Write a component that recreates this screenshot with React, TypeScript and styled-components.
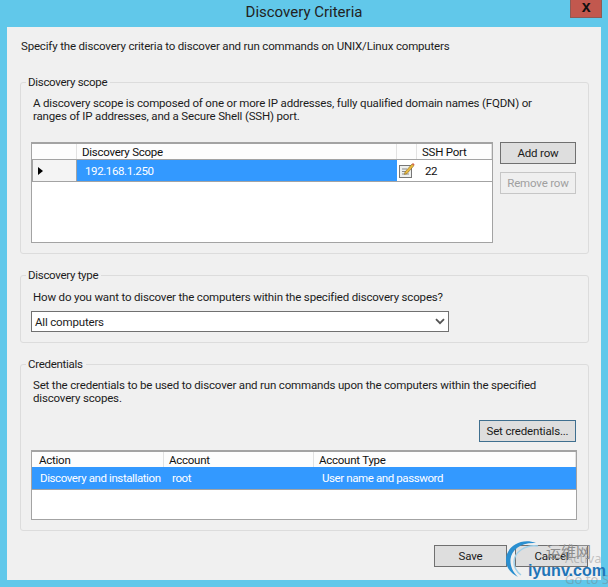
import React from "react";
import styled, { createGlobalStyle } from "styled-components";

const Global = createGlobalStyle`
  html, body { margin: 0; padding: 0; background: #61c8ea; }
  * { box-sizing: border-box; }
`;

const Window = styled.div`
  position: relative;
  width: 608px;
  height: 587px;
  background: #61c8ea;
  padding: 0 7px 7px 7px;
  display: flex;
  flex-direction: column;
  overflow: hidden;
  font-family: Roboto, "Noto Sans", sans-serif;
  font-size: 11.5px;
  letter-spacing: -0.17px;
  color: #1c1c1c;
`;

const TitleBar = styled.div`
  height: 27px;
  flex: none;
  text-align: center;
  font-size: 15px;
  letter-spacing: 0;
  line-height: 24px;
  color: #222;
`;

const CloseButton = styled.div`
  position: absolute;
  top: 0;
  right: 6px;
  width: 32px;
  height: 18px;
  background: #c2584e;
  border: 1px solid #8d5a55;
  border-top: none;
  color: #111;
  font: bold 16px/13px "Liberation Sans", sans-serif;
  text-align: center;
`;

const Client = styled.div`
  flex: 1;
  background: #f0f0f0;
  padding: 11px 13px 0 13px;
  display: flex;
  flex-direction: column;
`;

const Intro = styled.div`
  line-height: 16px;
  height: 37px;
  margin-left: 1px;
`;

const Group = styled.fieldset<{ $h: number; $mb?: number }>`
  margin: 0 0 ${(p) => p.$mb ?? 0}px 0;
  padding: 0 10px;
  height: ${(p) => p.$h}px;
  width: 569px;
  border: 1px solid #dcdcdc;
  border-radius: 3px;
  min-width: 0;
`;

const Legend = styled.legend`
  padding: 0 3px 0 2px;
  margin-left: -5px;
  line-height: 14px;
  letter-spacing: -0.3px;
`;

const Desc = styled.div<{ $mt: number }>`
  line-height: 13px;
  margin: ${(p) => p.$mt}px 0 0 2px;
  white-space: nowrap;
`;

const ScopeRow = styled.div`
  display: flex;
  gap: 7px;
  margin-top: 19px;
`;

const Grid = styled.div<{ $w: number; $h: number }>`
  width: ${(p) => p.$w}px;
  height: ${(p) => p.$h}px;
  flex: none;
  background: #fff;
  border: 1px solid #a3a3a3;
  border-top-width: 2px;
`;

const Row = styled.div<{ $h: number; $line?: boolean }>`
  display: flex;
  height: ${(p) => p.$h}px;
  ${(p) => (p.$line ? "border-bottom: 1px solid #a3a3a3;" : "")}
`;

const HeadCell = styled.div<{ $w: number; $pad?: number }>`
  width: ${(p) => p.$w}px;
  flex: none;
  padding: 1px 0 0 ${(p) => p.$pad ?? 5}px;
  line-height: 14px;
  letter-spacing: -0.25px;
  color: #111;
  background: #fdfdfd;
  border-right: 1px solid #e2e2e2;
`;

const Cell = styled.div<{ $w: number; $sel?: boolean; $pad?: number }>`
  width: ${(p) => p.$w}px;
  flex: none;
  display: flex;
  align-items: center;
  white-space: nowrap;
  letter-spacing: -0.4px;
  padding-left: ${(p) => p.$pad ?? 8}px;
  background: ${(p) => (p.$sel ? "#3399ff" : "#fff")};
  color: ${(p) => (p.$sel ? "#fff" : "#111")};
`;

const RowHeader = styled.div`
  width: 45px;
  flex: none;
  display: flex;
  align-items: center;
  padding-left: 5px;
  background: #f4f4f4;
  border-left: 1px solid #a3a3a3;
  border-right: 1px solid #a3a3a3;
`;

const Arrow = styled.div`
  width: 0;
  height: 0;
  border-top: 4.5px solid transparent;
  border-bottom: 4.5px solid transparent;
  border-left: 5px solid #000;
`;

const ButtonColumn = styled.div`
  display: flex;
  flex-direction: column;
  gap: 8px;
`;

const Button = styled.button<{ $w: number; $disabled?: boolean; $focus?: boolean }>`
  width: ${(p) => p.$w}px;
  height: 22px;
  padding: 0;
  font: inherit;
  letter-spacing: inherit;
  color: ${(p) => (p.$disabled ? "#a0a0a0" : "#1a1a1a")};
  background: ${(p) => (p.$disabled ? "#efefef" : "#dedede")};
  border: 1px solid ${(p) => (p.$disabled ? "#c6c6c6" : p.$focus ? "#3f6f8f" : "#707070")};
`;

const SelectBox = styled.div`
  width: 418px;
  height: 21px;
  margin-top: 7px;
  background: #fff;
  border: 1px solid #707070;
  padding: 0 3px;
  display: flex;
  align-items: center;
  justify-content: space-between;
`;

const CredAction = styled.div`
  display: flex;
  justify-content: flex-end;
  margin: 15px 2px 8px 0;
`;

const Footer = styled.div`
  display: flex;
  justify-content: flex-end;
  gap: 8px;
  margin-top: 14px;
`;

const Watermark = styled.div`
  position: absolute;
  left: 503px;
  top: 538px;
  width: 105px;
  height: 49px;
  pointer-events: none;
`;

const WmCn = styled.span`
  position: absolute;
  left: 43px;
  top: 3px;
  font: 15px/20px "Noto Sans CJK SC", sans-serif;
  letter-spacing: 0;
  color: #8c8c8c;
`;

const WmDomain = styled.span`
  position: absolute;
  left: 25px;
  top: 24px;
  font: bold 16px/18px "Liberation Sans", sans-serif;
  letter-spacing: 0;
  color: #1f75b8;
`;

const Ghost = styled.span<{ $t: number; $l: number }>`
  position: absolute;
  left: ${(p) => p.$l}px;
  top: ${(p) => p.$t}px;
  font: 13px/14px "Noto Sans", sans-serif;
  letter-spacing: 0;
  color: rgba(120, 120, 120, 0.4);
  white-space: nowrap;
`;

const EditIcon = () => (
  <svg width="17" height="17" viewBox="0 0 17 17">
    <rect x="1.5" y="3.5" width="12" height="12" fill="#eef0ee" stroke="#777" />
    <path d="M4 7h5M4 9.5h7M4 12h7" stroke="#8a8a8a" strokeWidth="1" />
    <path d="M7 10l7-8 2 1.6-7 8-2.6.8z" fill="#e8b93e" stroke="#8a6a20" strokeWidth="0.6" />
    <path d="M14 2l1-1 1.6 1.4-1 1.2z" fill="#d8604a" />
  </svg>
);

const Chevron = () => (
  <svg width="10" height="7" viewBox="0 0 10 7">
    <path d="M1 1.2l4 4 4-4" fill="none" stroke="#555" strokeWidth="1.8" />
  </svg>
);

export default function App() {
  return (
    <Window>
      <Global />
      <TitleBar>Discovery Criteria</TitleBar>
      <CloseButton>x</CloseButton>
      <Client>
        <Intro>Specify the discovery criteria to discover and run commands on UNIX/Linux computers</Intro>
        <Group $h={179} $mb={14}>
          <Legend>Discovery scope</Legend>
          <Desc $mt={8}>
            A discovery scope is composed of one or more IP addresses, fully qualified domain names (FQDN) or
            <br />
            ranges of IP addresses, and a Secure Shell (SSH) port.
          </Desc>
          <ScopeRow>
            <Grid $w={462} $h={101}>
              <Row $h={16} $line>
                <HeadCell $w={45} />
                <HeadCell $w={320}>Discovery Scope</HeadCell>
                <HeadCell $w={20} />
                <HeadCell $w={75}>SSH Port</HeadCell>
              </Row>
              <Row $h={22} $line>
                <RowHeader>
                  <Arrow />
                </RowHeader>
                <Cell $w={320} $sel>192.168.1.250</Cell>
                <Cell $w={20} $pad={1}>
                  <EditIcon />
                </Cell>
                <Cell $w={75}>22</Cell>
              </Row>
            </Grid>
            <ButtonColumn>
              <Button $w={76}>Add row</Button>
              <Button $w={76} $disabled>Remove row</Button>
            </ButtonColumn>
          </ScopeRow>
        </Group>
        <Group $h={75} $mb={14}>
          <Legend>Discovery type</Legend>
          <Desc $mt={9}>How do you want to discover the computers within the specified discovery scopes?</Desc>
          <SelectBox>
            All computers
            <Chevron />
          </SelectBox>
        </Group>
        <Group $h={174}>
          <Legend>Credentials</Legend>
          <Desc $mt={8}>
            Set the credentials to be used to discover and run commands upon the computers within the specified
            <br />
            discovery scopes.
          </Desc>
          <CredAction>
            <Button $w={97} $focus>Set credentials...</Button>
          </CredAction>
          <Grid $w={546} $h={70}>
            <Row $h={15}>
              <HeadCell $w={132} $pad={7}>Action</HeadCell>
              <HeadCell $w={150} $pad={5}>Account</HeadCell>
              <HeadCell $w={262} $pad={5}>Account Type</HeadCell>
            </Row>
            <Row $h={23} $line>
              <Cell $w={132} $sel>Discovery and installation</Cell>
              <Cell $w={150} $sel>root</Cell>
              <Cell $w={262} $sel>User name and password</Cell>
            </Row>
          </Grid>
        </Group>
        <Footer>
          <Button $w={73}>Save</Button>
          <Button $w={73}>Cancel</Button>
        </Footer>
      </Client>
      <Watermark>
        <Ghost $l={62} $t={13}>Activa</Ghost>
        <Ghost $l={62} $t={34}>Go to S</Ghost>
        <svg width="50" height="49" viewBox="0 0 50 49">
          <path d="M33 5C17 -1 2 10 3 23C3.5 31 9 36 15 39C9 33 7 27 7.5 21C8.5 12 18 4 33 5z" fill="#2a8fd0" />
          <path d="M35 8C23 6 11 14 11 24C11 30 14 34 18 37" fill="none" stroke="#9fd0ea" strokeWidth="1.5" />
        </svg>
        <WmCn>运维网</WmCn>
        <WmDomain>iyunv.com</WmDomain>
      </Watermark>
    </Window>
  );
}
